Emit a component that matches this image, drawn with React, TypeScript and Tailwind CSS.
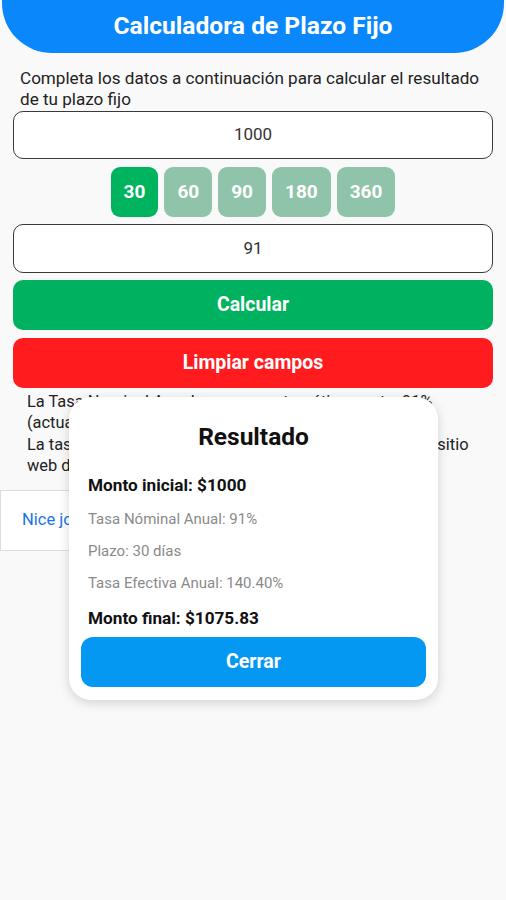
import React from "react";

export default function App() {
  const chips = ["30", "60", "90", "180", "360"];
  return (
    <div
      className="relative w-[506px] h-[900px] overflow-hidden bg-[#f9f9f9]"
      style={{ fontFamily: "Roboto, 'Noto Sans', sans-serif" }}
    >
      <div className="h-[53px] mx-[2px] bg-[#0a88fb] rounded-b-[50px] flex items-center justify-center">
        <span className="text-white text-[24.6px] font-bold leading-none">Calculadora de Plazo Fijo</span>
      </div>

      <p className="px-[20px] pt-[15px] text-[17.1px] leading-[21px] text-[#222]">
        Completa los datos a continuación para calcular el resultado de tu plazo fijo
      </p>

      <div className="mx-[13px] mt-[1px] h-[48px] rounded-[10px] border-[1.5px] border-[#3a3a3a] bg-white flex items-center justify-center text-[17px] text-[#333]">
        1000
      </div>

      <div className="mt-[8px] flex justify-center gap-[6px]">
        {chips.map((c, i) => (
          <div
            key={c}
            className={
              i === 0
                ? "h-[50px] px-[13px] rounded-[9px] bg-[#00b35f] flex items-center justify-center text-white text-[19px] font-bold"
                : "h-[50px] px-[13px] rounded-[9px] bg-[#8fc4aa] flex items-center justify-center text-white text-[19px] font-bold"
            }
          >
            {c}
          </div>
        ))}
      </div>

      <div className="mx-[13px] mt-[7px] h-[49px] rounded-[10px] border-[1.5px] border-[#3a3a3a] bg-white flex items-center justify-center text-[17px] text-[#333]">
        91
      </div>

      <div className="mx-[13px] mt-[7px] h-[50px] rounded-[10px] bg-[#00b25f] flex items-center justify-center text-white text-[19.5px] font-bold">
        Calcular
      </div>

      <div className="mx-[13px] mt-[8px] h-[50px] rounded-[10px] bg-[#ff1b1e] flex items-center justify-center text-white text-[19.5px] font-bold">
        Limpiar campos
      </div>

      <div className="px-[27px] pt-[3px] text-[16.4px] leading-[21.3px] text-[#222] whitespace-nowrap">
        <p>
          La Tasa Nominal Anual se carga automáticamente: 91%
          <br />
          (actualizada al día de hoy)
        </p>
        <p>
          La tasa actual es obtenida automáticamente a partir del sitio
          <br />
          web del Banco Central
        </p>
      </div>

      <div className="mt-[14px] w-[330px] h-[61px] bg-white border border-[#dddddd] flex items-center pl-[21px]">
        <span className="text-[#1a73e8] text-[16.5px]">Nice job! This is a test ad.</span>
      </div>

      <div className="absolute left-[69px] top-[397px] w-[369px] h-[303px] rounded-[22px] bg-white shadow-[0_3px_12px_rgba(0,0,0,0.16)] px-[12px] pt-[25px]">
        <div className="text-center text-[24.5px] font-bold text-[#111] leading-[30px]">Resultado</div>
        <div className="px-[7px]">
          <div className="mt-[23px] text-[17.2px] font-bold text-[#111] leading-[20px]">Monto inicial: $1000</div>
          <div className="mt-[15px] text-[15px] text-[#8a8a8a] leading-[18px]">Tasa Nóminal Anual: 91%</div>
          <div className="mt-[14px] text-[15px] text-[#8a8a8a] leading-[18px]">Plazo: 30 días</div>
          <div className="mt-[14px] text-[15px] text-[#8a8a8a] leading-[18px]">Tasa Efectiva Anual: 140.40%</div>
          <div className="mt-[16px] text-[17.2px] font-bold text-[#111] leading-[20px]">Monto final: $1075.83</div>
        </div>
        <div className="mt-[9px] h-[50px] rounded-[12px] bg-[#0598f3] flex items-center justify-center text-white text-[19.5px] font-bold">
          Cerrar
        </div>
      </div>
    </div>
  );
}
